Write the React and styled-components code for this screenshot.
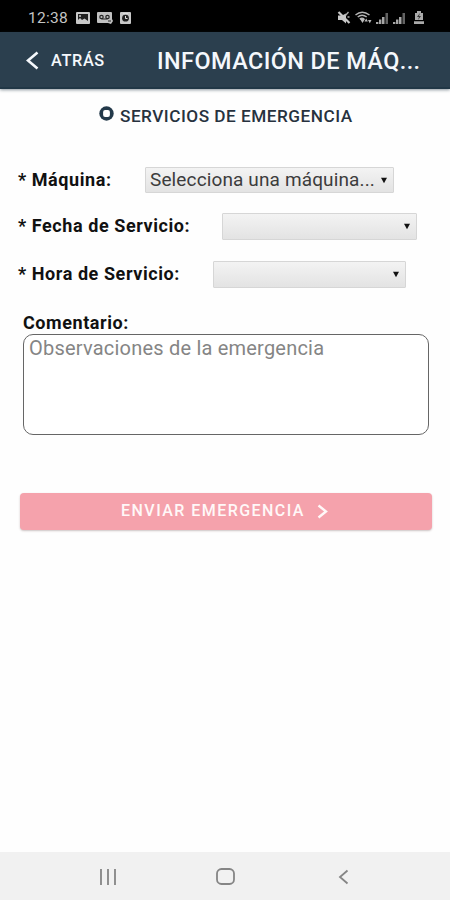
import React from "react";
import styled, { createGlobalStyle } from "styled-components";

const GlobalStyle = createGlobalStyle`
  * { box-sizing: border-box; }
  body { margin: 0; background: #fff; font-family: Roboto, sans-serif; }
  button, textarea { font-family: inherit; margin: 0; }
`;

const Screen = styled.div`
  display: flex;
  flex-direction: column;
  width: 450px;
  height: 900px;
  overflow: hidden;
  background: #fefefe;
`;

const StatusBar = styled.div`
  display: flex;
  align-items: center;
  justify-content: space-between;
  height: 32px;
  padding: 3px 26px 0 28px;
  background: #000;
  color: #c4c4c4;
`;

const StatusGroup = styled.div`
  display: flex;
  align-items: center;
  gap: ${(p) => p.$gap}px;
`;

const BatterySlot = styled.span`
  display: flex;
  margin-left: 4px;
`;

const Clock = styled.span`
  width: 41px;
  font-size: 15.5px;
  letter-spacing: 0.3px;
  line-height: 20px;
  white-space: nowrap;
`;

const Header = styled.header`
  display: flex;
  align-items: center;
  height: 57px;
  padding: 2px 0 0 26px;
  background: #2b3f4e;
  border-bottom: 2px solid #213746;
  box-shadow: 0 1px 3px rgba(30, 50, 65, 0.5);
  color: #f5f8fc;
`;

const BackButton = styled.button`
  display: flex;
  align-items: center;
  gap: 12px;
  width: 131px;
  padding: 0;
  border: 0;
  background: none;
  color: inherit;
  font-size: 16.3px;
  font-weight: 500;
  letter-spacing: 0.65px;
  line-height: 20px;
`;

const HeaderTitle = styled.h1`
  margin: 0;
  font-size: 23.4px;
  font-weight: 500;
  letter-spacing: 0.45px;
  line-height: 28px;
  white-space: nowrap;
`;

const Content = styled.main`
  display: flex;
  flex: 1;
  flex-direction: column;
  padding: 15px 18px 0;
`;

const SectionTitle = styled.h2`
  display: flex;
  align-items: center;
  gap: 6px;
  height: 24px;
  margin: 0 0 39px 81px;
  color: #27323e;
  font-size: 17.2px;
  font-weight: 500;
  letter-spacing: 0.5px;
  white-space: nowrap;

  svg { margin-bottom: 5px; }
`;

const Field = styled.div`
  display: flex;
  align-items: center;
  height: ${(p) => p.$height}px;
`;

const Label = styled.label`
  flex: none;
  width: ${(p) => p.$width}px;
  color: #111;
  font-size: 18px;
  font-weight: 700;
  letter-spacing: 0.57px;
  line-height: 22px;
  white-space: nowrap;
`;

const SelectBox = styled.button`
  display: flex;
  align-items: center;
  justify-content: space-between;
  width: ${(p) => p.$width}px;
  height: ${(p) => p.$height || 27}px;
  padding: 0 6px 0 4px;
  border: 1px solid #d6d6d6;
  border-radius: 1px;
  background: linear-gradient(#f3f3f3, #e3e3e3);
  color: #3c3c3c;
  font-size: 19px;
  letter-spacing: 0.13px;
  line-height: 22px;
  white-space: nowrap;
`;

const CommentGroup = styled.div`
  display: flex;
  flex-direction: column;
  margin: 23px 3px 0 5px;
`;

const CommentArea = styled.textarea`
  display: block;
  height: 101px;
  padding: 1px 5px;
  border: 1px solid #666;
  border-radius: 10px;
  outline: 0;
  background: #fff;
  color: #333;
  font-size: 20px;
  letter-spacing: 0.21px;
  line-height: 24px;
  resize: none;

  &::placeholder { color: #858585; opacity: 1; }
`;

const SubmitButton = styled.button`
  display: flex;
  align-items: center;
  justify-content: center;
  gap: 12px;
  height: 37px;
  margin: 58px 0 0 2px;
  padding: 0 3px 1px 0;
  border: 0;
  border-radius: 4px;
  background: #f5a2ac;
  box-shadow: 0 1px 2px rgba(90, 60, 60, 0.3);
  color: #fff8f8;
  font-size: 16px;
  font-weight: 500;
  letter-spacing: 1.45px;
  line-height: 20px;
`;

const NavBar = styled.nav`
  display: flex;
  align-items: center;
  justify-content: space-between;
  height: 48px;
  padding: 1px 101px 0 99px;
  background: #f1f1f1;
`;

const HomeSlot = styled.span`
  display: flex;
  margin-right: 4px;
`;

const Arrow = () => (
  <svg width="6" height="7" viewBox="0 0 6 7"><path d="M0 .7h6L3 6.3z" fill="#111" /></svg>
);

const Chevron = ({ width, height, weight, flip, color = "currentColor" }) => (
  <svg width={width} height={height} viewBox={`0 0 ${width} ${height}`} fill="none" stroke={color} strokeWidth={weight}>
    <path d={flip
      ? `M1.5 1.5 L${width - 2} ${height / 2} L1.5 ${height - 1.5}`
      : `M${width - 1.5} 1.5 L2 ${height / 2} L${width - 1.5} ${height - 1.5}`} />
  </svg>
);

const ImageIcon = () => (
  <svg width="14" height="12" viewBox="0 0 14 12">
    <rect width="14" height="12" rx="1" fill="#c8c8c8" />
    <path d="M2 2h10v7L8.5 6.5 6 8 4 6 2 8z" fill="#202020" />
    <circle cx="4" cy="4" r="1" fill="#c8c8c8" />
  </svg>
);

const VoicemailIcon = () => (
  <svg width="16" height="12" viewBox="0 0 16 12">
    <path d="M1 0h13q1 0 1 1v6l1 2-2 3-3-1H1q-1 0-1-1V1q0-1 1-1z" fill="#c0c0c0" />
    <g fill="none" stroke="#242424" strokeWidth="1.2"><circle cx="4.5" cy="5" r="1.7" /><circle cx="10.5" cy="5" r="1.7" /><path d="M4.5 7h6M11 9h3" /></g>
  </svg>
);

const ClockIcon = () => (
  <svg width="11" height="12" viewBox="0 0 11 12">
    <rect width="11" height="12" rx="1" fill="#c8c8c8" />
    <circle cx="5.5" cy="6.2" r="3.4" fill="#202020" />
    <path d="M5.5 4v2.5h2M3 1.5h5" fill="none" stroke="#ddd" />
  </svg>
);

const MuteIcon = () => (
  <svg width="14" height="13" viewBox="0 0 14 13">
    <path d="M1 4.5h4l4-2v10L5 9H1z" fill="#c8c8c8" />
    <path d="M1.5 1l11 11" stroke="#c8c8c8" strokeWidth="2.2" />
    <path d="M8.5 4.5l3-3.5M10.5 6h2" stroke="#aaa" strokeWidth="1.3" />
  </svg>
);

const WifiIcon = () => (
  <svg width="17" height="13" viewBox="0 0 17 13">
    <g fill="none" stroke="#b4b4b4" strokeWidth="1.5"><path d="M.5 4q6.5-5.5 14 0M2.7 6q4.3-3.5 9 0M4.8 8.2q2.2-1.8 4.4 0" /></g>
    <path d="M5 8h5l-2.5 4zM9.5 10.5l1.7-3 1.7 3zM13 9h3.5l-1.7 3.2z" fill="#bbb" />
  </svg>
);

const SignalIcon = () => (
  <svg width="13" height="12" viewBox="0 0 13 12">
    <path d="M0 10h2.4v2H0zM3 7.5h2.4V12H3zM6 5h2.5v7H6z" fill="#a6a6a6" />
    <path d="M9.5 1h2.5v11H9.5z" fill="#626262" />
  </svg>
);

const BatteryIcon = () => (
  <svg width="10" height="13" viewBox="0 0 10 13">
    <path d="M3 0h4v2h2v7H1V2h2zM0 10.3h10V13H0z" fill="#aaa" />
    <path d="M6 2L3 6h2l-1 3 3-4H5z" fill="#333" />
  </svg>
);

const RingIcon = () => (
  <svg width="15" height="15" viewBox="0 0 15 15">
    <circle cx="7.5" cy="7.5" r="7.2" fill="#23394a" />
    <rect x="4.1" y="4.1" width="6.8" height="6.8" rx="2" fill="#fff" />
  </svg>
);

export default function App() {
  return (
    <>
      <GlobalStyle />
      <Screen>
        <StatusBar>
          <StatusGroup $gap={7}>
            <Clock>12:38</Clock>
            <ImageIcon />
            <VoicemailIcon />
            <ClockIcon />
          </StatusGroup>
          <StatusGroup $gap={4}>
            <MuteIcon />
            <WifiIcon />
            <SignalIcon />
            <SignalIcon />
            <BatterySlot><BatteryIcon /></BatterySlot>
          </StatusGroup>
        </StatusBar>
        <Header>
          <BackButton>
            <Chevron width={13} height={19} weight={2.6} />
            ATRÁS
          </BackButton>
          <HeaderTitle>INFOMACIÓN DE MÁQ...</HeaderTitle>
        </Header>
        <Content>
          <SectionTitle>
            <RingIcon />
            SERVICIOS DE EMERGENCIA
          </SectionTitle>
          <Field $height={26}>
            <Label $width={127}>* Máquina:</Label>
            <SelectBox $width={249} $height={26}>
              <span>Selecciona una máquina...</span>
              <Arrow />
            </SelectBox>
          </Field>
          <Field $height={66}>
            <Label $width={204}>* Fecha de Servicio:</Label>
            <SelectBox $width={195}><span /><Arrow /></SelectBox>
          </Field>
          <Field $height={30}>
            <Label $width={195}>* Hora de Servicio:</Label>
            <SelectBox $width={193}><span /><Arrow /></SelectBox>
          </Field>
          <CommentGroup>
            <Label $width={200} htmlFor="comment">Comentario:</Label>
            <CommentArea id="comment" placeholder="Observaciones de la emergencia" />
          </CommentGroup>
          <SubmitButton>
            ENVIAR EMERGENCIA
            <Chevron width={11} height={15} weight={2.4} flip />
          </SubmitButton>
        </Content>
        <NavBar>
          <svg width="18" height="16" viewBox="0 0 18 16"><path d="M2 0v16M9 0v16M16 0v16" stroke="#858585" strokeWidth="1.8" /></svg>
          <HomeSlot>
            <svg width="19" height="17" viewBox="0 0 19 17"><rect x="1" y="1" width="17" height="15" rx="4.5" fill="none" stroke="#858585" strokeWidth="1.8" /></svg>
          </HomeSlot>
          <Chevron width={11} height={16} weight={1.8} color="#858585" />
        </NavBar>
      </Screen>
    </>
  );
}
